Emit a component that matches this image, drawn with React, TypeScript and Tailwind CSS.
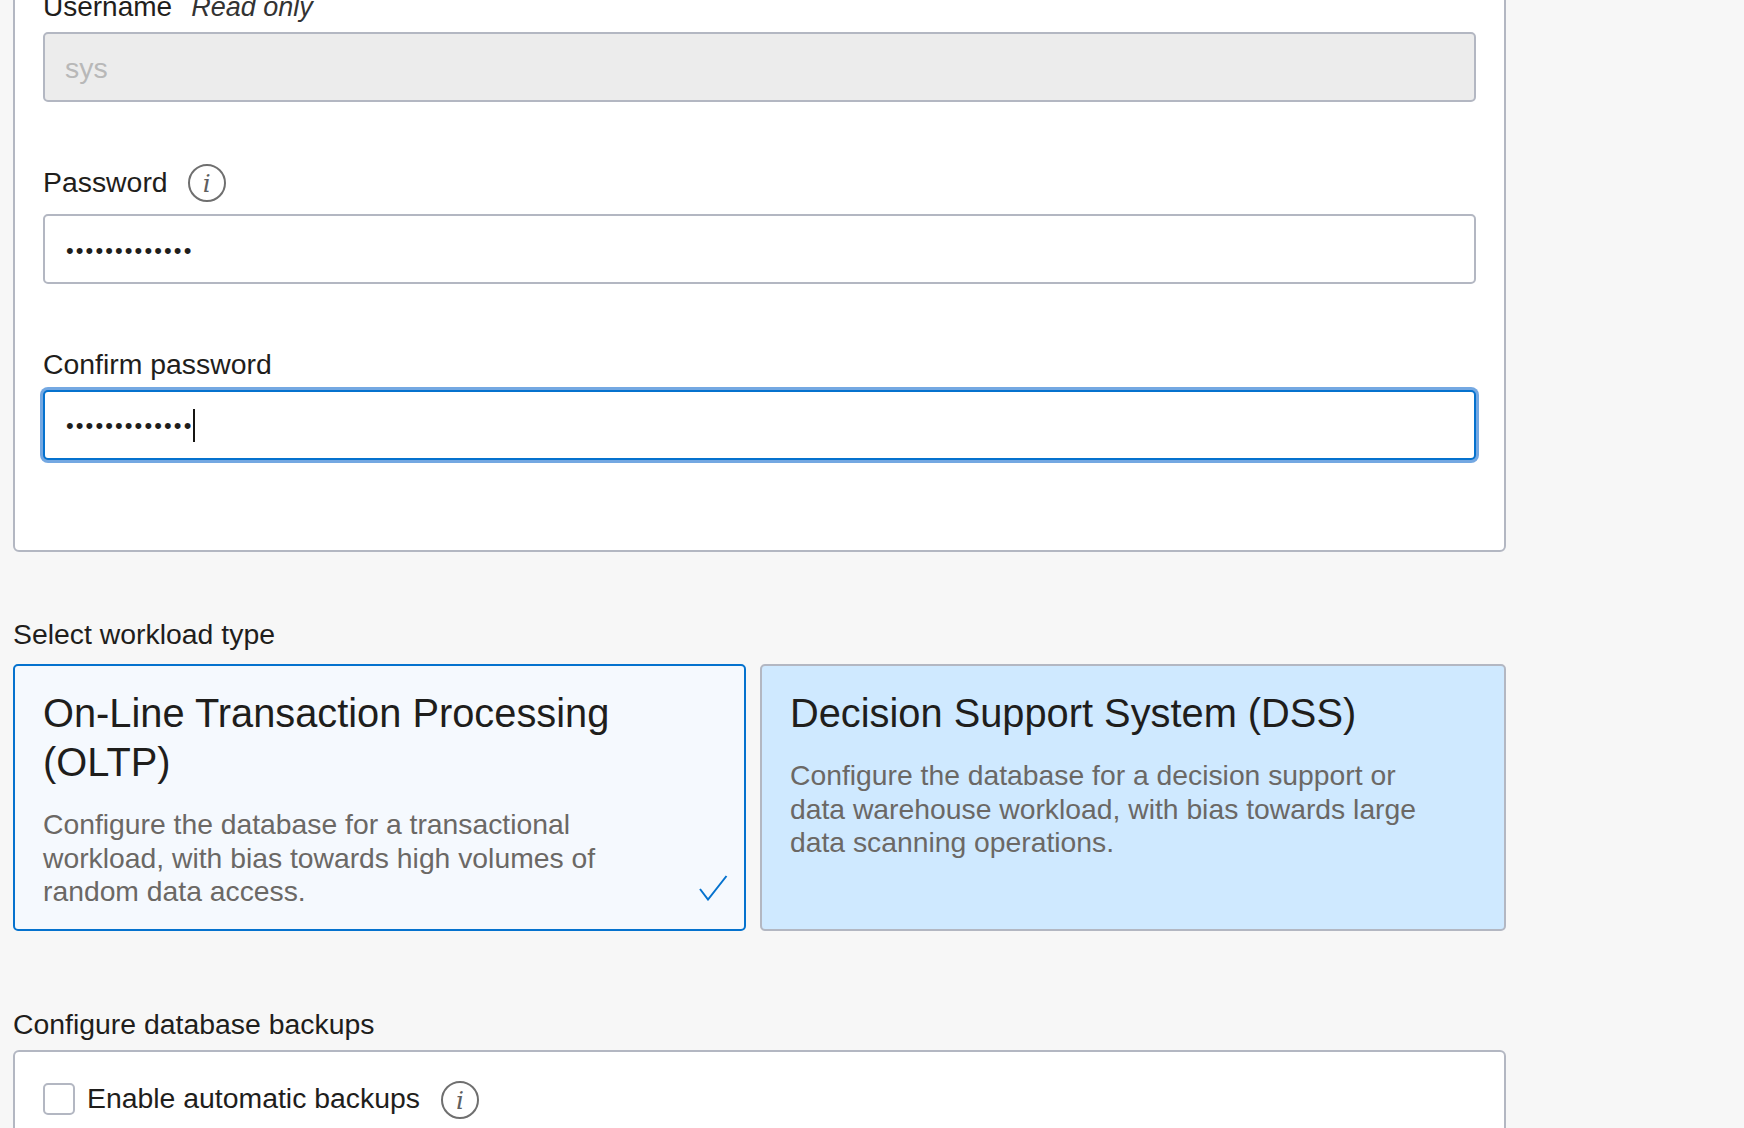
import React from "react";

function Info() {
  return (
    <span className="flex h-[38px] w-[38px] shrink-0 items-center justify-center rounded-full border-2 border-[#6f6f6f] bg-white text-[25px] leading-none text-[#5f5f5f] italic [font-family:'DejaVu_Serif',serif]">
      i
    </span>
  );
}

function Card({
  title,
  desc,
  selected,
  className,
}: {
  title: string;
  desc: string;
  selected?: boolean;
  className: string;
}) {
  return (
    <div className={"relative h-[267px] rounded-[5px] border-2 pt-[23px] pl-[28px] " + className}>
      <h3 className="max-w-[640px] text-[39.8px] leading-[49px] font-normal text-[#1f1e1c]">{title}</h3>
      <p className="mt-[21px] max-w-[640px] text-[28.3px] leading-[33.5px] text-[#6b6865]">{desc}</p>
      {selected && (
        <svg className="absolute right-[16px] bottom-[28px]" width="29" height="26" viewBox="0 0 29 26" fill="none">
          <path d="M1 14 L9 24.5 L27.5 1" stroke="#0572ce" strokeWidth="2" />
        </svg>
      )}
    </div>
  );
}

export default function App() {
  return (
    <div className="h-[1128px] w-full overflow-hidden bg-[#f7f7f7] pl-[13px] text-[28.4px] text-[#1f1e1c] [font-family:'Liberation_Sans',Arial,sans-serif]">
      <div className="w-[1493px]">
        <section className="mt-[-40px] h-[592px] rounded-[6px] border-2 border-[#b3b7c2] bg-white px-[28px]">
          <div className="mt-[29px] flex h-[32px] items-center gap-[19px] leading-[32px]">
            <span className="text-[28px]">Username</span>
            <span className="text-[27px] text-[#333] italic">Read only</span>
          </div>
          <div className="mt-[9px] flex h-[70px] w-[1433px] items-center rounded-[5px] border-2 border-[#b3b7c2] bg-[#ececec] pt-[3px] pl-[20px] text-[#b8b8b8]">
            sys
          </div>

          <div className="mt-[62px] flex h-[38px] items-center gap-[20px]">
            <span className="mt-[-2px]">Password</span>
            <Info />
          </div>
          <div className="mt-[12px] flex h-[70px] w-[1433px] items-center rounded-[5px] border-2 border-[#b3b7c2] bg-white pt-[2px] pl-[21px] text-[22px] tracking-[2.1px] text-[#1f1e1c]">
            •••••••••••••
          </div>

          <div className="mt-[64px] h-[32px] leading-[32px]">Confirm password</div>
          <div className="mt-[10px] flex h-[70px] w-[1433px] items-center rounded-[5px] border-2 border-[#0572ce] bg-white pl-[21px] shadow-[0_0_0_3px_#74a8e2]">
            <span className="text-[22px] tracking-[2.1px]">•••••••••••••</span>
            <span className="h-[33px] w-[2px] bg-[#161513]" />
          </div>
        </section>

        <div className="mt-[66px] h-[32px] leading-[32px]">Select workload type</div>
        <div className="mt-[14px] flex gap-[14px]">
          <Card
            className="w-[733px] border-[#0572ce] bg-[#f5f9fe]"
            selected
            title="On-Line Transaction Processing (OLTP)"
            desc="Configure the database for a transactional workload, with bias towards high volumes of random data access."
          />
          <Card
            className="w-[746px] border-[#b3b7c2] bg-[#cfe9ff]"
            title="Decision Support System (DSS)"
            desc="Configure the database for a decision support or data warehouse workload, with bias towards large data scanning operations."
          />
        </div>

        <div className="mt-[77px] h-[32px] leading-[32px]">Configure database backups</div>
        <section className="mt-[10px] h-[200px] rounded-[6px] border-2 border-[#b3b7c2] bg-white px-[28px] pt-[25px]">
          <div className="flex items-start">
            <span className="mt-[6px] h-[32px] w-[32px] rounded-[5px] border-2 border-[#b3b7c2] bg-white" />
            <span className="mt-[5px] ml-[12px] h-[32px] leading-[32px]">Enable automatic backups</span>
            <span className="mt-[4px] ml-[21px]">
              <Info />
            </span>
          </div>
        </section>
      </div>
    </div>
  );
}
